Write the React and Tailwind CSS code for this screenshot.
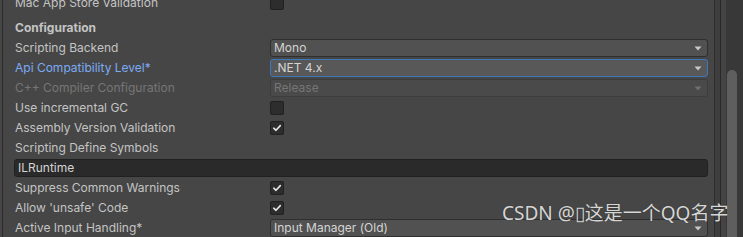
const font = { fontFamily: "Inter, 'Noto Sans', sans-serif" };

function Check() {
  return (
    <svg width="10" height="10" viewBox="0 0 10 10" className="block">
      <path d="M1.8 5.2 L4 7.3 L8.3 2.6" fill="none" stroke="#e6e6e6" strokeWidth="1.6" strokeLinecap="round" strokeLinejoin="round" />
    </svg>
  );
}

function Checkbox({ checked }) {
  return (
    <div className="flex h-[14px] w-[14px] items-center justify-center rounded-[2px] border border-[#202020] bg-[#2d2d2d]">
      {checked && <Check />}
    </div>
  );
}

function Arrow({ dim }) {
  return (
    <svg width="8" height="5" viewBox="0 0 8 5" className="block">
      <path d="M0.5 0.5 L7.5 0.5 L4 4.5 Z" fill={dim ? "#6f6f6f" : "#c8c8c8"} />
    </svg>
  );
}

function Dropdown({ value, focused, disabled }) {
  const cls = focused
    ? "border-[#3a79bb] bg-[#585858]"
    : disabled
    ? "border-[#3d3d3d] bg-[#4a4a4a]"
    : "border-[#2f2f2f] bg-[#515151]";
  return (
    <div className={`flex h-[18px] w-[438px] items-center justify-between rounded-[3px] border pl-[3px] pr-[5px] ${cls}`}>
      <span className={`text-[12px] leading-none ${disabled ? "text-[#767676]" : "text-[#d4d4d4]"}`}>{value}</span>
      <Arrow dim={disabled} />
    </div>
  );
}

function Row({ label, labelClass = "text-[#c4c4c4]", children }) {
  return (
    <div className="flex h-5 items-center">
      <div className={`w-[255px] shrink-0 text-[12px] leading-none ${labelClass}`}>{label}</div>
      {children}
    </div>
  );
}

export default function App() {
  return (
    <div className="relative flex h-[237px] w-[743px] overflow-hidden bg-[#464646]" style={font}>
      <div className="w-[2px] shrink-0" />
      <div className="w-[1px] shrink-0 bg-[#2c2c2c]" />
      <div className="w-[711px] shrink-0 pl-[12px]">
        <div className="-mt-[7px] flex h-5 items-center">
          <div className="w-[255px] shrink-0 text-[12px] leading-none text-[#c4c4c4]">Mac App Store Validation</div>
          <Checkbox />
        </div>
        <div className="mt-[5px] flex h-5 items-center text-[12px] font-bold leading-none text-[#c4c4c4]">
          Configuration
        </div>
        <Row label="Scripting Backend">
          <Dropdown value="Mono" />
        </Row>
        <Row label="Api Compatibility Level*" labelClass="text-[#7babf5]">
          <Dropdown value=".NET 4.x" focused />
        </Row>
        <Row label="C++ Compiler Configuration" labelClass="text-[#767676]">
          <Dropdown value="Release" disabled />
        </Row>
        <Row label="Use incremental GC">
          <Checkbox />
        </Row>
        <Row label="Assembly Version Validation">
          <Checkbox checked />
        </Row>
        <Row label="Scripting Define Symbols" />
        <div className="flex h-5 items-center">
          <div className="-ml-[1px] flex h-[18px] w-[694px] items-center rounded-[3px] border border-[#212121] bg-[#2a2a2a] pl-[3px] text-[12px] leading-none text-[#d4d4d4]">
            ILRuntime
          </div>
        </div>
        <Row label="Suppress Common Warnings">
          <Checkbox checked />
        </Row>
        <Row label="Allow 'unsafe' Code">
          <Checkbox checked />
        </Row>
        <Row label="Active Input Handling*">
          <Dropdown value="Input Manager (Old)" />
        </Row>
      </div>
      <div className="w-[1px] shrink-0 bg-[#2e2e2e]" />
      <div className="w-[5px] shrink-0 bg-[#3e3e3e]" />
      <div className="w-[1px] shrink-0 bg-[#282828]" />
      <div className="w-[5px] shrink-0 bg-[#444444]" />
      <div className="flex-1 bg-[#383838] pl-[1px] pt-[70px]">
        <div className="h-full w-[10px] rounded-t-full bg-[#5e5e5e]" />
      </div>
      <div
        className="absolute left-[502px] top-[204px] whitespace-nowrap text-[19px] leading-none text-[#d6d6d6]"
        style={{ fontFamily: "'Noto Sans', 'Noto Sans CJK SC', sans-serif", textShadow: "0 0 1px #2a2a2a" }}
      >
        CSDN @▯这是一个QQ名字
      </div>
    </div>
  );
}
